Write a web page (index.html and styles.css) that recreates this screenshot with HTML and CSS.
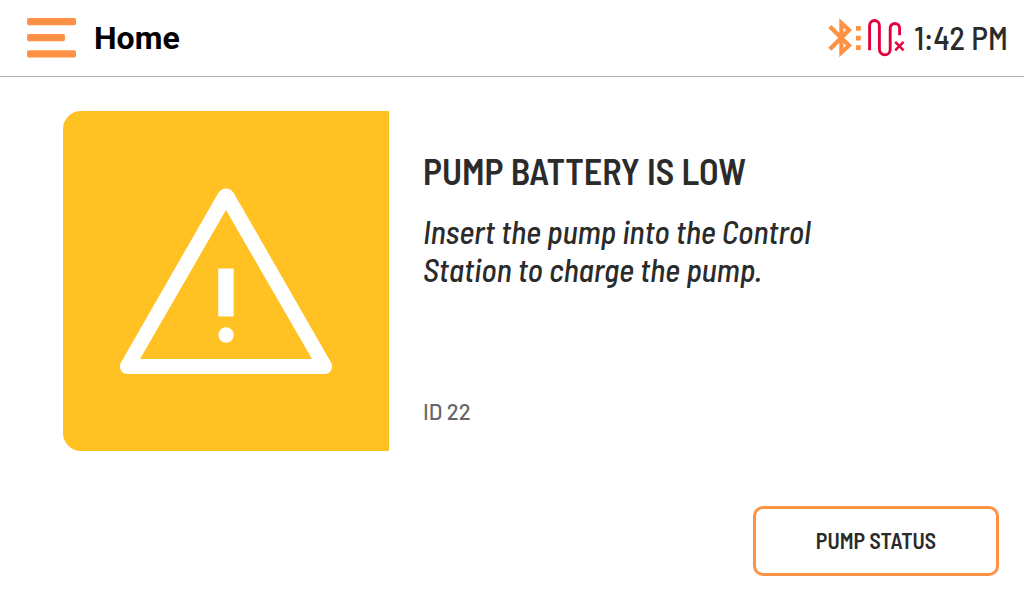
FILE: index.html
```html
<!DOCTYPE html>
<html lang="en">
<head>
<meta charset="utf-8">
<meta name="viewport" content="width=device-width, initial-scale=1">
<title>Home</title>
<link rel="stylesheet" href="styles.css">
</head>
<body class="screen">
<header class="topbar">
  <button class="menu" type="button" aria-label="Menu">
    <svg width="49" height="40" viewBox="0 0 49 40" fill="#ff9144" aria-hidden="true">
      <rect width="49" height="7.2" rx="1.8"/>
      <rect y="16" width="38" height="7.2" rx="1.8"/>
      <rect y="32.2" width="49" height="7.4" rx="1.8"/>
    </svg>
  </button>
  <h1 class="title">Home</h1>
  <div class="status">
    <svg width="78" height="40" viewBox="0 0 78 40" fill="none" role="img" aria-label="Bluetooth on, tubing disconnected">
      <path d="M1.800 8.600 21 27.500 13.400 34.500V5L21 12 1.800 31.200" stroke="#ff9144" stroke-width="4.200"/>
      <path d="M28 8h4.8v4.8H28zM28 17.7h4.8v4.8H28zM28 27.2h4.8v4.8H28z" fill="#ff9144"/>
      <path d="M41.600 32.200V7.700a4.900 5.200 0 0 1 9.800 0V31.500a5.400 5.400 0 0 0 10.800 0V10.200a4.700 4.700 0 0 1 9.400 0V17.200" stroke="#e4003c" stroke-width="2.900"/>
      <path d="M67.200 23.900 75.600 32.300M75.600 23.900 67.200 32.300" stroke="#e4003c" stroke-width="2.400"/>
    </svg>
    <time class="clock" datetime="13:42">1:42 PM</time>
  </div>
</header>
<main class="content">
  <section class="alert">
    <div class="badge">
      <svg width="214" height="188" viewBox="0 0 214 188" fill="#fff" role="img" aria-label="Warning">
        <path fill-rule="evenodd" d="M99.300 5.900A9 9 0 0 1 114.700 5.900L212 175.500A7.600 7.600 0 0 1 205.500 187H8.500A7.600 7.600 0 0 1 2 175.500ZM107 23 21 172H193Z"/>
        <path d="M99.200 81.500h15.400v48H99.200z"/>
        <circle cx="107" cy="148" r="7.700"/>
      </svg>
    </div>
    <div class="details">
      <h2 class="heading">PUMP BATTERY IS LOW</h2>
      <p class="message">Insert the pump into the Control Station to charge the pump.</p>
      <p class="code">ID 22</p>
    </div>
  </section>
  <div class="actions">
    <button class="action" type="button">PUMP STATUS</button>
  </div>
</main>
</body>
</html>
```
FILE: styles.css
```css
* {
  box-sizing: border-box;
}

.screen {
  margin: 0;
  min-height: 100vh;
  display: flex;
  flex-direction: column;
  background: #fff;
  color: #2b2b2b;
  font-family: "Barlow Semi Condensed", "Roboto Condensed", "Liberation Sans Narrow", Roboto, sans-serif;
}

.topbar {
  display: flex;
  align-items: center;
  min-height: 77px;
  padding: 0 16px 0 27px;
  border-bottom: 1px solid #b3b3b3;
}

.menu {
  display: flex;
  padding: 0;
  border: 0;
  background: none;
}

.title {
  margin: 0 0 0 18px;
  color: #000;
  font: bold 32px/40px Roboto, sans-serif;
}

.status {
  display: flex;
  align-items: center;
  gap: 8px;
  margin-left: auto;
}

.clock {
  padding-bottom: 3px;
  font-size: 32px;
  font-weight: 500;
  line-height: 40px;
}

.content {
  flex: 1;
  display: flex;
  flex-direction: column;
  padding: 34px 25px 24px 63px;
}

.alert {
  display: flex;
  gap: 34px;
}

.badge {
  display: flex;
  flex: none;
  align-items: center;
  justify-content: center;
  padding: 76px 56px;
  border-radius: 18px 0 0 18px;
  background: #ffc222;
}

.details {
  display: flex;
  flex-direction: column;
  padding: 38px 0 25px;
  max-width: 420px;
}

.heading {
  margin: 0;
  font-size: 36px;
  font-weight: 600;
  line-height: 44px;
}

.message {
  margin: 19px 0 0;
  font-size: 32px;
  font-style: italic;
  font-weight: 500;
  line-height: 38px;
}

.code {
  margin: auto 0 0;
  color: #666;
  font-family: Barlow, Roboto, sans-serif;
  font-size: 22px;
  font-weight: 500;
  line-height: 30px;
}

.actions {
  display: flex;
  justify-content: flex-end;
  margin-top: auto;
}

.action {
  min-width: 246px;
  padding: 16px 24px 18px;
  border: 3px solid #ff9144;
  border-radius: 10px;
  background: #fff;
  color: #2b2b2b;
  font: 600 22px/30px "Barlow Semi Condensed", "Roboto Condensed", "Liberation Sans Narrow", Roboto, sans-serif;
}
```
